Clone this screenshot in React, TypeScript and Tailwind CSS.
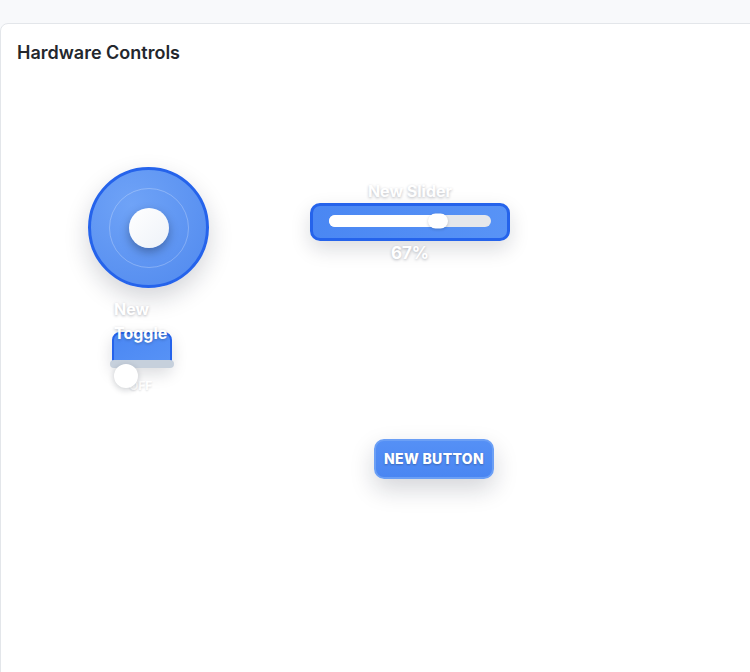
import React from 'react';

const shadowText = '[text-shadow:0_1px_3px_rgba(15,23,42,0.28)]';

function Knob() {
  return (
    <div className="absolute left-[87px] top-[143px] flex h-[121px] w-[121px] items-center justify-center rounded-full border-[3px] border-[#2563eb] bg-[radial-gradient(circle_at_35%_30%,#6fa3f7,#5089ee)] shadow-[0_10px_25px_rgba(15,23,42,0.18)]">
      <div className="flex h-[80px] w-[80px] items-center justify-center rounded-full border border-white/25">
        <div className="h-10 w-10 rounded-full bg-gradient-to-br from-white to-[#eef2f8] shadow-[0_4px_10px_rgba(15,23,42,0.35)]" />
      </div>
    </div>
  );
}

function Slider({ value }: { value: number }) {
  return (
    <div className="absolute left-[309px] top-[155px] flex w-[200px] flex-col items-center">
      <span className={`text-base font-bold leading-6 text-white ${shadowText}`}>New Slider</span>
      <div className="flex h-[38px] w-[200px] items-center rounded-[10px] border-[3px] border-[#2563eb] bg-gradient-to-r from-[#4a87f3] to-[#5893f6] px-4 pb-[2px] shadow-[0_8px_20px_rgba(15,23,42,0.15)]">
        <div className="relative h-3 w-full rounded-full bg-[#e5e7eb]">
          <div className="h-3 rounded-full bg-white" style={{ width: `${value}%` }} />
          <div
            className="absolute top-1/2 h-[15px] w-5 -translate-x-1/2 -translate-y-1/2 rounded-full bg-white shadow-[0_1px_3px_rgba(15,23,42,0.2)]"
            style={{ left: `${value}%` }}
          />
        </div>
      </div>
      <span className={`text-[17px] font-bold leading-6 text-white ${shadowText}`}>{value}%</span>
    </div>
  );
}

function Toggle() {
  return (
    <div className="absolute left-[109px] top-[273px] flex w-[66px] flex-col items-start">
      <span className={`relative z-10 w-[62px] pl-[4px] text-base font-bold leading-6 text-white ${shadowText}`}>
        New Toggle
      </span>
      <div className="ml-[2px] -mt-[13px] h-[36px] w-[60px] rounded-lg border-2 border-[#2563eb] bg-gradient-to-br from-[#4a87f3] to-[#5893f6] shadow-[0_6px_16px_rgba(15,23,42,0.15)]" />
      <div className="relative -mt-[8px] h-2 w-[64px] rounded-full bg-[#c6d0dc]" />
      <div className="relative -mt-[4px] flex items-end pl-[4px]">
        <div className="relative z-10 h-6 w-6 rounded-full bg-white shadow-[0_2px_6px_rgba(15,23,42,0.2)]" />
        <span className="-mb-[6px] -ml-[9px] text-xs font-bold text-white [text-shadow:0_1px_2px_rgba(15,23,42,0.15)]">OFF</span>
      </div>
    </div>
  );
}

function PushButton() {
  return (
    <button className="absolute left-[373px] top-[415px] flex h-[40px] w-[120px] items-center justify-center rounded-[10px] border-2 border-[#6b9ff5] bg-gradient-to-b from-[#5590f6] to-[#4a86f2] text-sm font-extrabold uppercase tracking-wide text-white shadow-[0_10px_24px_rgba(15,23,42,0.18)] [text-shadow:0_1px_2px_rgba(15,23,42,0.3)]">
      New Button
    </button>
  );
}

export default function App() {
  return (
    <div className="h-[672px] w-[750px] overflow-hidden bg-[#f8f9fb] pt-[23px] font-[Inter,sans-serif]">
      <div className="relative h-[700px] w-[800px] rounded-tl-lg border border-[#e3e6ea] bg-white">
        <h2 className="px-4 pt-[15px] text-lg font-semibold leading-7 text-[#24272d]">Hardware Controls</h2>

        {/* widgets sit on a free canvas */}
        <Knob />
        <Slider value={67} />
        <Toggle />
        <PushButton />
      </div>
    </div>
  );
}
